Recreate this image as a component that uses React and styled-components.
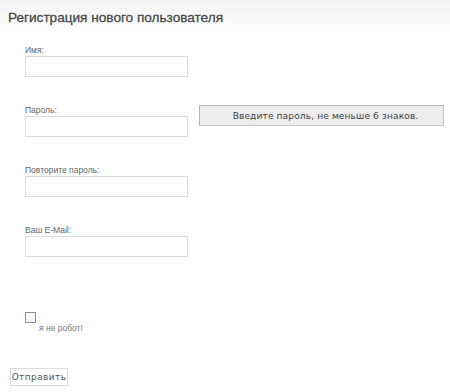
import React from 'react'
import styled, { createGlobalStyle } from 'styled-components'

const GlobalStyle = createGlobalStyle`
    html, body {
        margin: 0;
        padding: 0;
        background: #fff;
    }
    body {
        font-family: "Liberation Sans", Arial, sans-serif;
    }
`

const Page = styled.div`
    width: 450px;
    height: 392px;
    box-sizing: border-box;
    background: linear-gradient(#f3f3f3 0, #fff 34px);
    overflow: hidden;
`

const Title = styled.h1`
    margin: 0;
    padding: 8px 0 0 8px;
    height: 36px;
    box-sizing: border-box;
    font-family: "Liberation Sans", Arial, sans-serif;
    font-weight: normal;
    font-size: 13.6px;
    line-height: 20px;
    color: #4a4a4a;
    -webkit-text-stroke: 0.3px #4a4a4a;
`

const Form = styled.form`
    display: flex;
    flex-direction: column;
    padding: 8px 0 0 25px;
`

const FieldRow = styled.div`
    display: flex;
    align-items: flex-start;
    margin-bottom: 27px;
`

const Field = styled.div`
    display: flex;
    flex-direction: column;
`

const Label = styled.label`
    font-size: 8.5px;
    line-height: 12px;
    color: #666;
`

const Input = styled.input`
    width: 163px;
    height: 21px;
    box-sizing: border-box;
    margin: 0;
    border: 1px solid #dcdcdc;
    background: #fff;
    outline: none;
`

const Hint = styled.div`
    margin: 1px 0 0 11px;
    width: 245px;
    height: 21px;
    box-sizing: border-box;
    display: flex;
    align-items: center;
    justify-content: center;
    padding-left: 8px;
    background: #ececec;
    border: 1px solid #b5b5b5;
    border-right-color: #c8c8c8;
    border-bottom-color: #c8c8c8;
    font-family: "DejaVu Sans", Verdana, sans-serif;
    font-size: 9px;
    letter-spacing: 0.15px;
    color: #444;
`

const RobotRow = styled.div`
    display: flex;
    align-items: flex-start;
    margin-top: 28px;
`

const Check = styled.span`
    width: 11px;
    height: 11px;
    box-sizing: border-box;
    border: 1px solid #7f9aa3;
    background: linear-gradient(#fff, #eef2f2);
`

const CheckText = styled.span`
    margin: 10px 0 0 3px;
    font-size: 8.5px;
    line-height: 12px;
    color: #777;
`

const SubmitButton = styled.button`
    margin: 34px 0 0 -15px;
    align-self: flex-start;
    width: 58px;
    height: 18px;
    padding: 0;
    box-sizing: border-box;
    border: 1px solid #dadada;
    background: #fff;
    font-family: "DejaVu Sans", Verdana, sans-serif;
    font-size: 9px;
    letter-spacing: 0.4px;
    color: #555;
`

const fields = [
    { label: 'Имя:', type: 'text' },
    { label: 'Пароль:', type: 'password', hint: 'Введите пароль, не меньше 6 знаков.' },
    { label: 'Повторите пароль:', type: 'password' },
    { label: 'Ваш E-Mail:', type: 'text' },
]

const App = () => (
    <Page>
        <GlobalStyle />
        <Title>Регистрация нового пользователя</Title>
        <Form onSubmit={e => e.preventDefault()}>
            {fields.map(f => (
                <FieldRow key={f.label}>
                    <Field>
                        <Label>{f.label}</Label>
                        <Input type={f.type} />
                    </Field>
                    {f.hint && <Hint>{f.hint}</Hint>}
                </FieldRow>
            ))}
            <RobotRow>
                <Check />
                <CheckText>я не робот!</CheckText>
            </RobotRow>
            <SubmitButton type="submit">Отправить</SubmitButton>
        </Form>
    </Page>
)

export default App
